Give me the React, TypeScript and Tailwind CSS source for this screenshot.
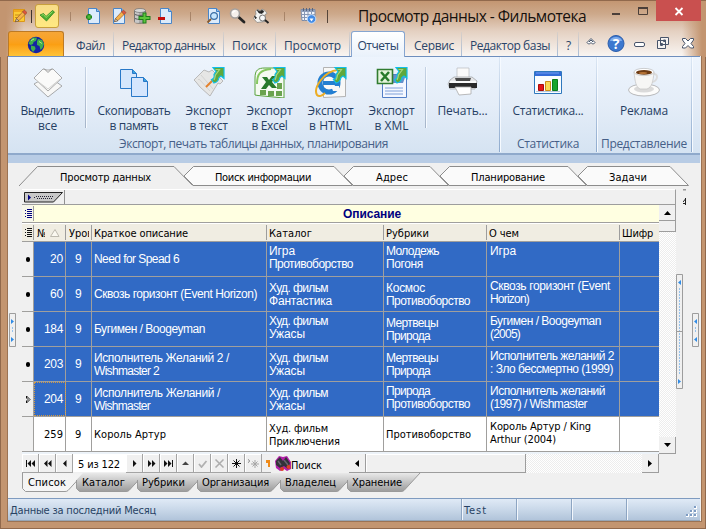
import { useLayoutEffect, useRef, useState } from "react";
import type { ReactNode } from "react";

const segoe = "font-['Open_Sans','Noto_Sans',sans-serif]";
const tahoma = "font-['DejaVu_Sans_Condensed','DejaVu_Sans',sans-serif] [font-stretch:condensed] text-[11px] leading-[13px]";
const msSans = "font-['Liberation_Sans',Arial,sans-serif] text-[12px] leading-[13px]";

/* Text run tracked so that it fills exactly w pixels. */
function T({ w, className = "", children }: { w: number; className?: string; children: string }) {
  const ref = useRef<HTMLSpanElement>(null);
  const [ls, setLs] = useState(0);
  useLayoutEffect(() => {
    if (ref.current) setLs((w - ref.current.getBoundingClientRect().width) / children.length);
  }, [w, children]);
  return (
    <span ref={ref} className={`inline-block shrink-0 whitespace-pre ${className}`} style={{ letterSpacing: `${ls}px` }}>
      {children}
    </span>
  );
}

function Svg({ w, h, className = "", children }: { w: number; h: number; className?: string; children: ReactNode }) {
  return (
    <svg width={w} height={h} viewBox={`0 0 ${w} ${h}`} className={`block shrink-0 ${className}`} fill="none">
      {children}
    </svg>
  );
}

const Page = () => (
  <>
    <path d="M2.500.5h8l3 3v12h-11z" fill="#dcebfb" stroke="#4a86c8" />
    <path d="M10.500.5v3h3" fill="#8fbdf0" stroke="#3f7fc4" />
  </>
);

const Pencil = () => (
  <g>
    <path d="M4.500 10.500 11 3.500l2.500 2.500-6.500 6.500-3.500 1.200z" fill="#f6b24a" stroke="#a5632a" strokeWidth=".8" />
    <path d="m10.500 4 1.800-2 2.800 2.600-1.900 2z" fill="#e0553a" stroke="#8a4a3a" strokeWidth=".6" />
    <path d="m3.500 13.700 1-3 2.400 2z" fill="#f5dcc0" stroke="#333" strokeWidth=".5" />
  </g>
);

function TitleBar() {
  return (
    <div className="flex h-[31px] items-start">
      <div className="flex h-[31px] w-[358px] items-start pt-[8px]">
        <Svg w={14} h={16} className="ml-[13px]">
          <path d="M.5 1.500h11v12H.5z" fill="#fccb35" stroke="#dc9817" />
          <path d="M1 2h10v2H1z" fill="#f0a81e" />
          <path d="M2 7h6M2 9.500h4" stroke="#c98a18" />
          <g transform="translate(-1 0)"><Pencil /></g>
        </Svg>
        <div className="ml-[4px] mt-[2px] h-[13px] w-px bg-[#3d342e]" />
        <div className="-mt-[4px] ml-[3px] flex h-[24px] w-[24px] items-center justify-center rounded-[3px] border border-[#c9a03c] bg-linear-to-b from-[#f8dc88] to-[#ffe981]">
          <Svg w={16} h={14}>
            <path d="m1 6 3.500-1.500 2.500 3L13.500 1.500 15.500 3 7.500 12z" fill="#4fae32" stroke="#2c8420" strokeWidth=".8" />
            <path d="m2.500 6.300 2-.8L7 8.500l6.500-5.800" stroke="#92dc62" />
          </Svg>
        </div>
        <div className="ml-[11px] mt-[4px] h-[9px] w-px bg-[#a88468]" />
        <Svg w={16} h={16} className="ml-[15px]">
          <Page />
          <path d="M0 9h6M3 6v6" stroke="#157a15" strokeWidth="3" />
          <path d="M.7 9h4.600M3 6.700v4.600" stroke="#62c840" strokeWidth="1.200" />
        </Svg>
        <Svg w={17} h={16} className="ml-[9px]">
          <Page />
          <Pencil />
        </Svg>
        <Svg w={17} h={16} className="ml-[6px]">
          <path d="M.5 2.500v11c0 1.300 2 1.800 5.500 1.800s5.500-.5 5.500-1.800v-11" fill="#a9a9a9" stroke="#6a6a6a" strokeWidth=".8" />
          <path d="M2 4v11M4 4v11" stroke="#e8e8e8" />
          <ellipse cx="6" cy="2.500" rx="5.500" ry="2" fill="#d8d8d8" stroke="#707070" strokeWidth=".7" />
          <path d="M1 6.500c3 1.300 7 1.300 10 0M1 10.500c3 1.300 7 1.300 10 0" stroke="#5c5c5c" />
          <path d="M4.500 10h12M10.500 4.500v11" stroke="#1f7d1c" strokeWidth="4" />
          <path d="M5.500 10h10M10.500 5.500v9" stroke="#5cc63c" strokeWidth="2" />
        </Svg>
        <Svg w={16} h={16} className="ml-[7px]">
          <Page />
          <path d="M0 10.500h7" stroke="#c40d0d" strokeWidth="3" />
        </Svg>
        <div className="ml-[16px] mt-[4px] h-[9px] w-px bg-[#a88468]" />
        <Svg w={15} h={16} className="ml-[15px]">
          <Page />
          <path d="m5 11-3.500 3.500" stroke="#8a5a2c" strokeWidth="2" />
          <circle cx="8" cy="8" r="3.400" fill="#c6e6ff" stroke="#3c6ea4" strokeWidth="1.200" />
        </Svg>
        <Svg w={17} h={16} className="ml-[8px]">
          <path d="m9.500 9 5.500 5" stroke="#242424" strokeWidth="2.800" strokeLinecap="round" />
          <circle cx="6" cy="5.500" r="4.500" fill="#f5f0ec" stroke="#a4a09e" strokeWidth="1.600" />
          <path d="M3.500 5a3 3 0 0 1 3-2" stroke="#fff" strokeWidth="1.500" />
        </Svg>
        <Svg w={18} h={16} className="ml-[7px]">
          <path d="M2.500 3 5 1l2 2.200L9 1l3 1.500 2 3-2 1v7l-8 1-3.500-4L3 6z" fill="#f4f4f2" stroke="#8d8a86" strokeWidth=".8" />
          <path d="M4 2 7 3.500 9 2l2 1.500-2 2-3-.5zM1.500 8l2 1.500-1 1.500z" fill="#252525" stroke="#252525" strokeWidth=".6" />
          <circle cx="9.500" cy="10" r="3" fill="#f8f8f8" stroke="#777" />
          <path d="m12 12 3.500 3" stroke="#222" strokeWidth="2" />
        </Svg>
        <div className="ml-[13px] mt-[4px] h-[9px] w-px bg-[#a88468]" />
        <Svg w={17} h={16} className="ml-[15px]">
          <path d="M1 1.500h14v11H2z" fill="#f1f4fa" stroke="#7e8ca6" />
          <path d="M1 2h14v2H1z" fill="#8f9fbc" />
          <path d="M1 6.500h14M1 9.500h12M4.500 4v9M8 4v9M11.500 4v9" stroke="#8797b4" />
          <path d="M3.500 0v3M6.500 0v3M9.500 0v3M12.500 0v3" stroke="#59657c" />
          <circle cx="11.500" cy="11" r="4.300" fill="#438be5" stroke="#dcecff" strokeWidth=".8" />
          <path d="M9.500 10.500h4l-2 3z" fill="#fff" />
        </Svg>
        <div className="ml-[10px] mt-[2px] h-[13px] w-px bg-[#55453a]" />
      </div>
      <T w={228} className={`${segoe} mt-[5px] text-[15.500px] leading-[22px] text-[#17110d]`}>
        Просмотр данных - Фильмотека
      </T>
      <Svg w={70} h={22} className="ml-auto mr-0">
        <path d="M25 0h45v21H25z" fill="#c9504f" />
        <path d="m44.500 8 7 7m0-7-7 7" stroke="#fff" strokeWidth="1.800" />
      </Svg>
      <div className="w-[5px]" />
    </div>
  );
}

function WindowGlyphs() {
  return (
    <Svg w={42} h={14} className="absolute left-[610px] top-[5px]">
      <path d="M2 9h8" stroke="#4b3f39" strokeWidth="2" />
      <path d="M28.500 3v6.500h9V3z" stroke="#4b3f39" />
      <path d="M28 3h10" stroke="#4b3f39" strokeWidth="2" />
    </Svg>
  );
}

type Item = [string, number, number, number, boolean];
/* label, text width, cell width, left padding, separator */
const menu: Item[] = [
  ["Файл", 29, 38, 0, true],
  ["Редактор данных", 93, 110, 8, true],
  ["Поиск", 35, 52, 8, true],
  ["Просмотр", 57, 74, 8, true],
];
const menu2: Item[] = [
  ["Сервис", 40, 57, 9, true],
  ["Редактор базы", 80, 96, 8, true],
  ["?", 6, 21, 8, true],
];

function MenuItems({ items }: { items: Item[] }) {
  return (
    <>
      {items.map(([label, w, cell, pad, sep], i) => (
        <div key={i} className="flex h-[25px] shrink-0 items-center" style={{ width: cell, paddingLeft: pad }}>
          <T w={w} className="mt-[4px]">{label}</T>
          {sep && <div className="ml-auto h-[24px] w-px bg-linear-to-b from-[#d9cfc8] to-[#a9bdd6]" />}
        </div>
      ))}
    </>
  );
}

function MenuRow() {
  return (
    <div className={`flex h-[26px] items-start pl-[8px] text-[12px] leading-[16px] text-[#2a4468] ${segoe}`}>
      <div className="flex h-[26px] w-[56px] items-center justify-center rounded-t-[3px] border border-b-0 border-[#bd7a24] bg-linear-to-b from-[#f5a637] via-[#fb9f13] to-[#ffc63a]">
        <Svg w={18} h={18}>
          <circle cx="9" cy="9" r="8.200" fill="#1521a4" />
          <path d="M3 4.500 6 1.600l4 .2-1 3L6.500 6 6 8 3.500 9 1.500 7.500zM4 9.500l4 1 .5 2.500L6 16l-2-3zM11 3l4 1 2 4-1.500 4-2 2-1-4-2.500-1V5.500z" fill="#3fae4d" />
          <path d="M4 4.500 7 3M12 5.500l3 2" stroke="#b2e879" />
        </Svg>
      </div>
      <div className="w-[12px]" />
      <MenuItems items={menu} />
      <div className="relative ml-[1px] flex h-[26px] w-[54px] items-center justify-center rounded-t-[3px] border border-b-0 border-[#86a5d0] bg-linear-to-b from-white to-[#e9f1fb]">
        <T w={41} className="mt-[2px]">Отчеты</T>
      </div>
      <MenuItems items={menu2} />
      <Svg w={112} h={20} className="ml-[6px] mt-[3px]">
        <path d="m2 8.500 4-4 4 4-1.500 1.500h-1L6 8.500 4.500 10h-1z" fill="#fff" stroke="#47556a" />
        <path d="m4 8 2-2 2 2" stroke="#47556a" />
        <circle cx="31" cy="9.500" r="8" fill="#3c78cf" stroke="#2b5dab" />
        <path d="M25 7a6 4 0 0 1 12 0" fill="#7facec" />
        <text x="31" y="14.500" textAnchor="middle" fill="#fff" fontFamily="Open Sans" fontSize="14" fontWeight="700">?</text>
        <rect x="49.500" y="8.500" width="10" height="4" rx="1.500" fill="#fff" stroke="#48546a" />
        <path d="M75.500 3.500h8v7h-8zM72.500 6.500h8v8h-8z" fill="#f5f2f0" stroke="#48546a" />
        <path d="M75.500 9.500h2v2h-2zM78.500 6h2v1.500h-2z" stroke="#48546a" />
        <path d="m97.500 4.500h3l2.500 2.500 2.500-2.500h3v1.500L106 9.500l2.500 3v1.500h-3L103 11.500 100.500 14h-3v-1.500l2.500-3-2.500-3.500z" fill="#fff" stroke="#48546a" />
      </Svg>
    </div>
  );
}

const ExportArrow = () => (
  <g>
    <path d="M20 1.500H31v11l-3-2.500-2 1.500c-.5 3-2 5-5 5.500l-2.500-3.500c2.500-.5 3-2.500 2.500-5l2-3z" fill="#5fa83c" stroke="#10bfea" strokeWidth="1.200" />
    <path d="M22.500 3.500h4L22.500 9c-.3 2-.5 3-1.500 5" stroke="#a5d67c" strokeWidth="1.200" />
  </g>
);

const ribbonIcons: Record<string, ReactNode> = {
  select: (
    <>
      <path d="m2 18 14-8 14 10-14 11z" fill="#f7f7f6" stroke="#a6a8aa" />
      <path d="m2 12 9-9 4 1h2l4-1 9 9-14 13z" fill="#fafaf9" stroke="#aaa" />
      <path d="m12 2.500 4 4 4-4" stroke="#999" />
      <path d="m4 14 12 9 12-10" stroke="#d2d2d0" />
    </>
  ),
  copy: (
    <>
      <path d="M2.500 3.500h12l4 4v15h-16z" fill="#d4e6fc" stroke="#2878c8" />
      <path d="M14.500 3.500v4h4" fill="#3ba2de" stroke="#2878c8" />
      <path d="M13.500 11.500h12l4 4v15h-16z" fill="#d5e6fd" stroke="#2878c8" />
      <path d="M25.500 11.500v4h4" fill="#3ba2de" stroke="#2878c8" />
    </>
  ),
  text: (
    <>
      <path d="m1 14 10-10 5 2 3-2 11 11-3 3-2-1-8 13-10-9-4-5z" fill="#e6e6e5" stroke="#b9b9b9" />
      <path d="m5 14 1-1 11 12M8 9l12 14" stroke="#d3d3d2" />
      <path d="m13 21 8-8" stroke="#e5812a" strokeWidth="2" />
      <ExportArrow />
    </>
  ),
  excel: (
    <>
      <path d="M1 29V12C1 4 4 2 11 2h19v30L4 29.500z" fill="#f5faf2" stroke="#59a23e" />
      <path d="M3 18C3 8 6 4 17 3" stroke="#85c75f" strokeWidth="2" />
      <path d="m8 11 5 0 2 3 3-4h5l-5 6 5 6h-5l-3-3-3 4H7l5-7z" fill="#277a2b" />
      <path d="M6 24h6v5H6zM14 25h6v5h-6zM22 25h6v5h-6zM23 17h5v6h-5z" fill="#6aa34f" />
      <ExportArrow />
    </>
  ),
  html: (
    <>
      <path d="M8.500 1.500h22v29l-22 1z" fill="#f8f8f7" stroke="#b3b3b3" />
      <circle cx="14" cy="17" r="9" stroke="#237fd1" strokeWidth="5" />
      <path d="M8 17h14" stroke="#237fd1" strokeWidth="4" />
      <path d="M16 20h8v5h-6z" fill="#f8f8f7" />
      <path d="M23 4C9 5-2 22 2 29c2 2 5 1 8-2" stroke="#ecad25" strokeWidth="2" />
      <ExportArrow />
    </>
  ),
  xml: (
    <>
      <path d="M6.500 8.500h24v23h-24z" fill="#f4f7ff" stroke="#537fc7" />
      <path d="M9 22h18M9 25h18M9 28h18" stroke="#7ea0d8" />
      <path d="M16 17h11l3-8H16z" fill="#6690cc" />
      <path d="M1.500 3.500h15v14h-15z" fill="#e4f4dc" stroke="#317c30" strokeWidth="1.600" />
      <path d="m5 6 8 9m0-9-8 9" stroke="#277a2b" strokeWidth="2.500" />
      <ExportArrow />
    </>
  ),
  print: (
    <>
      <path d="M10 2h12v12H10z" fill="#fafafa" stroke="#b7babd" strokeWidth=".7" />
      <path d="m3 14 4-3h18l5 4-2 8H3L1 18z" fill="#e5e6e8" stroke="#9b9da0" strokeWidth=".7" />
      <path d="m8 12 1 3h14l1-3z" fill="#4b4b4b" />
      <path d="M2 17h28v5H2z" fill="#292929" />
      <path d="M3 16h26" stroke="#fff" strokeWidth="1.500" />
      <path d="M8 21h16v7l-12 1z" fill="#fff" stroke="#aaa" strokeWidth=".8" />
    </>
  ),
  stats: (
    <>
      <path d="M2.500 5.500h27v22h-27z" fill="#fafdff" stroke="#2f78bd" />
      <path d="M3 6h26v4H3z" fill="#346bd8" />
      <path d="M4 7h23" stroke="#709ff0" />
      <path d="M6.500 18.500h5v6h-5z" fill="#e31717" stroke="#a90b0b" />
      <path d="M13.500 15.500h5v9h-5z" fill="#f9dc55" stroke="#cf8d15" />
      <path d="M20.500 13.500h5v11h-5z" fill="#16a52c" stroke="#0b7a1b" />
      <path d="M4 25.500h24" stroke="#b8c8dc" />
    </>
  ),
  coffee: (
    <>
      <ellipse cx="16" cy="24" rx="15.500" ry="6" fill="#fcfcfb" stroke="#b8b9bb" />
      <ellipse cx="16" cy="23" rx="10" ry="3.500" fill="#dadada" />
      <path d="M25 8c6-1 5 7-1 8" stroke="#dcdcdc" strokeWidth="2" />
      <path d="M6 6c1 10 2 15 6 17h7c5-2 6-7 7-17z" fill="#f6f6f5" stroke="#c2c2c2" strokeWidth=".7" />
      <ellipse cx="16" cy="6" rx="10" ry="3.600" fill="#fff" stroke="#bbb" strokeWidth=".7" />
      <ellipse cx="16" cy="6.400" rx="8" ry="2.400" fill="#6d3b13" />
      <ellipse cx="15" cy="7" rx="4" ry="1" fill="#b67335" />
    </>
  ),
};

type Btn = { icon: string; cell: string; a: [string, number]; b?: [string, number] };
const Button = ({ icon, cell, a, b }: Btn) => (
  <div className={`flex shrink-0 flex-col items-center pt-[9px] ${cell}`}>
    <Svg w={32} h={32}>{ribbonIcons[icon]}</Svg>
    <T w={a[1]} className="mt-[5px]">{a[0]}</T>
    {b && <T w={b[1]}>{b[0]}</T>}
  </div>
);

const GroupLine = () => <div className="h-[95px] w-px shrink-0 bg-linear-to-b from-[#dce7f4] to-[#8fabce] shadow-[1px_0_0_#f6faff]" />;
const Divider = () => <div className="mt-[10px] h-[61px] w-px shrink-0 bg-linear-to-b from-[#c4d2e4] to-[#a6b5c9] shadow-[1px_0_0_#f6faff]" />;

function Ribbon() {
  return (
    <div className={`-mt-px flex h-[99px] w-full border-b-2 border-t border-b-[#8fa9cb] border-t-[#6e8ebd] bg-linear-to-b from-[#edf4fd] via-[#e4edf8] to-[#d5e3f2] text-[12px] leading-[15px] text-[#263e63] ${segoe}`}>
      <div className="flex w-[491px] flex-col items-start">
        <div className="flex h-[79px]">
          <Button icon="select" cell="w-[79px]" a={["Выделить", 54]} b={["все", 19]} />
          <div className="-ml-[2px]"><Divider /></div>
          <Button icon="copy" cell="w-[96px]" a={["Скопировать", 73]} b={["в память", 49]} />
          <div className="-ml-[2px]" />
          <Button icon="text" cell="w-[57px]" a={["Экспорт", 46]} b={["в текст", 38]} />
          <div className="ml-[4px]" />
          <Button icon="excel" cell="w-[57px]" a={["Экспорт", 46]} b={["в Excel", 36]} />
          <div className="ml-[4px]" />
          <Button icon="html" cell="w-[57px]" a={["Экспорт", 46]} b={["в HTML", 43]} />
          <div className="ml-[4px]" />
          <Button icon="xml" cell="w-[57px]" a={["Экспорт", 46]} b={["в XML", 34]} />
          <div className="ml-[5px]"><Divider /></div>
          <Button icon="print" cell="w-[73px]" a={["Печать...", 50]} />
        </div>
        <T w={269} className="ml-[111px] text-[#465f88]">Экспорт, печать таблицы данных, планирования</T>
      </div>
      <GroupLine />
      <div className="flex w-[96px] flex-col items-center">
        <div className="h-[79px]"><Button icon="stats" cell="w-[96px]" a={["Статистика...", 71]} /></div>
        <T w={62} className="text-[#465f88]">Статистика</T>
      </div>
      <GroupLine />
      <div className="flex w-[94px] flex-col items-center">
        <div className="h-[79px]"><Button icon="coffee" cell="w-[94px]" a={["Реклама", 48]} /></div>
        <T w={86} className="text-[#465f88]">Представление</T>
      </div>
      <GroupLine />
    </div>
  );
}

/* label, text width, text offset, cell width */
const viewTabs: [string, number, number, number][] = [
  ["Просмотр данных", 91, 41, 165],
  ["Поиск информации", 96, 31, 160],
  ["Адрес", 32, 32, 96],
  ["Планирование", 74, 31, 138],
  ["Задачи", 38, 31, 102],
];

function ViewTabs() {
  return (
    <div className={`flex h-[23px] pl-[11px] pt-[3px] ${tahoma}`}>
      {viewTabs.map(([label, w, off, cell], i) => {
        const top = cell - 10;
        const outline = i
          ? `M0 10 L9.500.5 H${top} L${top + 18.5} 19.500 H9`
          : `M0 20 L18.500.5 H${top} L${top + 18.5} 19.500`;
        return (
          <div key={label} className="relative h-[20px] shrink-0" style={{ width: cell, paddingLeft: off }}>
            <Svg w={cell + 12} h={20} className="absolute left-0 top-0">
              <path d={outline} fill={i ? "#fafafa" : "#f0f0f0"} stroke="#8c8c8c" />
              {i > 0 && <path d="m0 10 9.500 9.500" stroke="#8c8c8c" />}
            </Svg>
            <T w={w} className="relative mt-[5px] text-black">{label}</T>
          </div>
        );
      })}
    </div>
  );
}

type Line = [string, number];
type Cell = { pad: string; lines: Line[] };
const one = (t: string, w: number): Cell => ({ pad: "pt-[11px]", lines: [[t, w]] });
const hi = (...lines: Line[]): Cell => ({ pad: "pt-[3px]", lines });
const lo = (...lines: Line[]): Cell => ({ pad: "pt-[5px]", lines });

const film: Line = ["Худ. фильм", 59];
const horror: Line = ["Ужасы", 36];
const nature: Line = ["Природа", 44];
const dead: Line = ["Мертвецы", 52];
const versus: Line = ["Противоборство", 84];

const rows: [string, number, Cell, Cell, Cell, Cell][] = [
  ["20", 13, one("Need for Spead 6", 85), hi(["Игра", 26], versus), hi(["Молодежь", 53], ["Погоня", 37]), hi(["Игра", 26])],
  ["60", 13, one("Сквозь горизонт (Event Horizon)", 163), lo(film, ["Фантастика", 63]), lo(["Космос", 39], versus), hi(["Сквозь горизонт (Event", 120], ["Horizon)", 39])],
  ["184", 19, one("Бугимен / Boogeyman", 111), hi(film, horror), lo(dead, nature), hi(["Бугимен / Boogeyman", 111], ["(2005)", 30])],
  ["203", 19, lo(["Исполнитель Желаний 2 /", 135], ["Wishmaster 2", 65]), lo(film, horror), lo(dead, nature), hi(["Исполнитель желаний 2", 124], [": Зло бессмертно (1999)", 123])],
  ["204", 19, lo(["Исполнитель Желаний /", 126], ["Wishmaster", 56]), lo(film, horror), hi(nature, versus), hi(["Исполнитель желаний", 115], ["(1997) / Wishmaster", 97])],
  ["259", 19, one("Король Артур", 72), lo(["Худ. фильм", 59], ["Приключения", 71]), one("Противоборство", 85), hi(["Король Артур / King", 101], ["Arthur (2004)", 66])],
];

const cellWidths = ["w-[175px] pl-[2px]", "w-[117px] pl-[2px]", "w-[103px] pl-[2px]", "w-[133px] pl-[3px]"];

function DataCell({ cell, width }: { cell: Cell; width: string }) {
  return (
    <div className={`flex h-full shrink-0 flex-col items-start border-r border-[#a09f9d] ${width} ${cell.pad}`}>
      {cell.lines.map(([t, w], i) => <T key={i} w={w}>{t}</T>)}
    </div>
  );
}

const ListGlyph = ({ color }: { color: string }) => (
  <Svg w={7} h={10} className="ml-[3px]">
    <path d="M0 1.500h1M0 4.500h1M0 7.500h1M2 .5h5M2 2.500h5M2 4.500h5M2 6.500h5M2 8.500h5" stroke={color} />
  </Svg>
);

function Grid() {
  return (
    <div className={`w-[637px] shrink-0 text-black ${tahoma}`}>
      <div className="flex h-[16px] items-center border-b border-t border-b-[#9d9d9d] border-t-white bg-[#f0f0f0]">
        <Svg w={40} h={11} className="ml-[2px]">
          <path d="M.5.500h38l-9 9.500H.5z" fill="#c8c8c8" stroke="#222" />
          <path d="M4 2.500v6l3-3z" fill="#00007f" />
          <path d="M10 5.500h1M12 4.500h17M13 6.500h16" stroke="#223" strokeDasharray="1 1" />
        </Svg>
        <div className="h-[14px] w-px bg-[#909090]" />
      </div>
      <div className="flex h-[17px] items-center bg-[#ffffe1]">
        <div className="flex h-[17px] w-[11px] items-center bg-[#f6f6ea]"><ListGlyph color="#00007f" /></div>
        <div className="h-[15px] w-px bg-[#9d9d9d]" />
        <T w={58} className="ml-[309px] mt-[2px] font-['Liberation_Sans',Arial,sans-serif] text-[12px] font-bold text-[#00007f]">Описание</T>
      </div>
      <div className="h-px bg-[#a09f9d]" />
      <div className="flex h-[18px] items-center border-t border-white bg-[#f0ede2]">
        <div className="flex w-[11px]"><ListGlyph color="#111" /></div>
        <div className="flex h-[15px] w-[32px] items-center overflow-hidden border-l border-[#9d9d9d] pl-[3px]">
          <span className="mt-px w-[8px] overflow-hidden">№</span>
          <Svg w={10} h={8} className="ml-[5px]"><path d="M.5 7.500 5 .5l4 7z" fill="#faf8f0" stroke="#bcb9ae" /></Svg>
        </div>
        <div className="h-[15px] w-[26px] overflow-hidden border-l border-[#9d9d9d] pl-[3px] pt-[2px]"><span className="block w-[20px] overflow-hidden whitespace-nowrap">Уровень</span></div>
        <div className="h-[15px] w-[175px] border-l border-[#9d9d9d] pl-[2px] pt-[2px]"><T w={94}>Краткое описание</T></div>
        <div className="h-[15px] w-[117px] border-l border-[#9d9d9d] pl-[2px] pt-[2px]"><T w={43}>Каталог</T></div>
        <div className="h-[15px] w-[103px] border-l border-[#9d9d9d] pl-[2px] pt-[2px]"><T w={43}>Рубрики</T></div>
        <div className="h-[15px] w-[133px] border-l border-[#9d9d9d] pl-[2px] pt-[2px]"><T w={30}>О чем</T></div>
        <div className="h-[15px] w-[40px] border-l border-[#9d9d9d] pl-[2px] pt-[2px]"><T w={31}>Шифр</T></div>
      </div>
      <div className="h-px bg-[#a09f9d]" />
      {rows.map(([id, w, ...cells], r) => (
        <div key={id} className={`flex h-[35px] border-b border-[#a09f9d] ${r < 5 ? `bg-[#316ac5] text-white ${msSans}` : "bg-white"}`}>
          <div className="flex h-[34px] w-[11px] shrink-0 items-center justify-center bg-[#f0f0f0]">
            {r < 4 && <div className="mt-[1px] h-[5px] w-[4px] rounded-full bg-black" />}
            {r === 4 && (
              <Svg w={6} h={9}><path d="M1.500 1v2l1.500 1.500L1.500 6v2L5 4.500z" fill="#fff" stroke="#111" /></Svg>
            )}
          </div>
          <div className="h-full w-px shrink-0 bg-[#a09f9d]" />
          <div className={`flex h-full w-[32px] shrink-0 justify-end border-r border-[#a09f9d] pr-[2px] pt-[11px] ${r === 4 ? "outline outline-dotted -outline-offset-1 outline-[#d59a3f]" : ""}`}><T w={w}>{id}</T></div>
          <div className="h-full w-[26px] shrink-0 border-r border-[#a09f9d] pl-[9px] pt-[11px]">9</div>
          {cells.map((c, i) => <DataCell key={i} cell={c} width={cellWidths[i]} />)}
        </div>
      ))}
      <div className="h-[2px] bg-[#edf3f9]" />
    </div>
  );
}

const checker = "bg-[conic-gradient(#fff_25%,#ededed_0_50%,#fff_0_75%,#ededed_0)] bg-[length:2px_2px]";

function VScroll() {
  return (
    <div className="flex w-[17px] shrink-0 flex-col">
      <div className="h-[16px] shrink-0 border-b border-r border-t border-[#9d9d9d] border-t-white bg-[#f0f0f0]" />
      <div className="flex h-[16px] shrink-0 items-center justify-center border-b border-r border-[#9d9d9d] bg-[#f0f0f0]">
        <Svg w={7} h={4}><path d="M0 4h7L3.500 0z" fill="#000" /></Svg>
      </div>
      <div className="h-[11px] shrink-0 border-b border-r border-[#9d9d9d] bg-[#f0f0f0]" />
      <div className={`flex-1 ${checker}`} />
      <div className="flex h-[17px] shrink-0 items-center justify-center border-b border-r border-[#9d9d9d] bg-[#f0f0f0]">
        <Svg w={7} h={4}><path d="M0 0h7L3.500 4z" fill="#000" /></Svg>
      </div>
    </div>
  );
}

const navGlyphs: [string, ReactNode][] = [
  ["w-[17px]", <path key="a" d="M1 1h1v7H1zM6 1v7L2.500 4.500zM10 1v7L6.500 4.500z" fill="#111" />],
  ["w-[17px]", <path key="b" d="M5.500 1v7L2 4.500zM9.500 1v7L6 4.500z" fill="#111" />],
  ["w-[17px]", <path key="c" d="M7.500 1v7L4 4.500z" fill="#111" />],
];
const navGlyphs2: [string, ReactNode][] = [
  ["w-[17px]", <path key="d" d="M4 1v7l3.500-3.500z" fill="#111" />],
  ["w-[17px]", <path key="e" d="M2 1v7l3.500-3.500zM6 1v7l3.500-3.500z" fill="#111" />],
  ["w-[17px]", <path key="f" d="M1 1v7l3.500-3.500zM5 1v7l3.500-3.500zM9 1h1v7H9z" fill="#111" />],
  ["w-[17px]", <path key="g" d="M2 6h7L5.500 2.500z" fill="#444" />],
  ["w-[17px]", <path key="h" d="m2 5 2.500 3L9.500 2" stroke="#b0b0b0" strokeWidth="1.800" />],
  ["w-[17px]", <path key="i" d="m1.500.5 8 8m0-8-8 8" stroke="#adadad" strokeWidth="1.500" />],
  ["w-[17px]", <path key="j" d="M5.500 0v9M1 4.500h9M2.500 1.500l6 6m0-6-6 6" stroke="#111" />],
  ["w-[17px]", <path key="k" d="M0 0v4l2-2zM7 1v8M3 5h8M4.500 2.500l5 5m0-5-5 5" stroke="#a5a5a5" />],
];
const NavButtons = ({ items }: { items: [string, ReactNode][] }) => (
  <>
    {items.map(([w, g], i) => (
      <div key={i} className={`flex h-[19px] shrink-0 items-center justify-center border-b border-r border-[#a4a4a4] bg-[#f0f0f0] shadow-[inset_1px_1px_0_#fff] ${w}`}>
        <Svg w={11} h={9}>{g}</Svg>
      </div>
    ))}
  </>
);

function NavBar() {
  return (
    <div className={`flex h-[19px] w-[637px] text-black ${tahoma}`}>
      <NavButtons items={navGlyphs} />
      <div className="flex h-[18px] w-[53px] shrink-0 items-center bg-white pl-[5px] pt-[2px]"><T w={42}>5 из 122</T></div>
      <div className="flex w-[145px] shrink-0">
        <NavButtons items={navGlyphs2} />
        <div className="flex h-[19px] w-[9px] items-center justify-end border-b border-[#a4a4a4]">
          <Svg w={5} h={9}><path d="M0 1h4v7H2V4H0z" fill="#ef8a19" /></Svg>
        </div>
      </div>
      <div className="flex h-[19px] w-[78px] shrink-0 items-center bg-[#f0f0f0]">
        <Svg w={18} h={18} className="ml-[3px]">
          <path d="M1 6 5 1l4 1 4-1 4 6v7l-4 2-3-2-4 2-4-3z" fill="#b321ab" />
          <path d="m2 6 4-4 3 4 3-4 4 6-2 6-4-3-4 2-4-3z" fill="#333238" />
          <path d="m4 6 3 4M10 5l4 5" stroke="#68656f" strokeWidth="1.500" />
          <circle cx="8" cy="14" r="2" fill="#dc3e24" /><circle cx="14.500" cy="12" r="2" fill="#dc3e24" />
        </Svg>
        <T w={31} className="-ml-px mt-[3px]">Поиск</T>
      </div>
      <div className="flex h-[19px] w-[17px] shrink-0 items-center justify-center border-b border-r border-[#9d9d9d] bg-[#f0f0f0]">
        <Svg w={4} h={7}><path d="M4 0v7L0 3.500z" fill="#000" /></Svg>
      </div>
      <div className="h-[19px] w-[160px] shrink-0 border-b border-r border-[#9d9d9d] bg-[#f0f0f0] shadow-[inset_1px_1px_0_#fff]" />
      <div className={`h-[19px] flex-1 ${checker}`} />
      <div className="flex h-[19px] w-[17px] shrink-0 items-center justify-center border-b border-r border-[#9d9d9d] bg-[#f0f0f0]">
        <Svg w={4} h={7}><path d="M0 0v7l4-3.500z" fill="#000" /></Svg>
      </div>
    </div>
  );
}

/* label, text width, text offset, cell width */
const sheets: [string, number, number, number][] = [
  ["Список", 38, 6, 54],
  ["Каталог", 43, 6, 61],
  ["Рубрики", 43, 5, 60],
  ["Организация", 67, 5, 83],
  ["Владелец", 51, 5, 67],
  ["Хранение", 50, 5, 67],
];

function SheetTabs() {
  return (
    <div className={`flex h-[26px] text-black ${tahoma}`}>
      {sheets.map(([label, w, off, cell], i) => {
        const foot = i === 5 ? 57 : cell - 8;
        return (
          <div key={label} className="relative h-[19px] shrink-0" style={{ width: cell, paddingLeft: off }}>
            <Svg w={cell + 12} h={19} className="absolute left-0 top-0">
              <defs>
                <linearGradient id={`sheet${i}`} x1="0" y1="0" x2="0" y2="1">
                  <stop offset="0" stopColor={i ? "#e9e9e9" : "#f2f2f2"} />
                  <stop offset="1" stopColor={i ? "#9b9b9b" : "#f6f6f6"} />
                </linearGradient>
              </defs>
              <path d={`M.5 ${i ? 7 : 0}V15.500L3.500 18.500H${foot - 3}Q${foot - 1} 18.500 ${foot} 17.500L${foot + 16} 0H${i ? 7 : 0}z`} fill={`url(#sheet${i})`} />
              <path d={`M.5 ${i ? 7 : 0}V15.500L3.500 18.500H${foot - 3}Q${foot - 1} 18.500 ${foot} 17.500L${foot + 16} 0`} stroke="#9a9a9a" />
            </Svg>
            <T w={w} className="relative mt-[3px]">{label}</T>
          </div>
        );
      })}
    </div>
  );
}

function Splitter({ h, left, right }: { h: number; left: boolean; right: boolean }) {
  return (
    <Svg w={7} h={h}>
      <path d={`M.5.5h6v${h - 1}h-6z`} fill="#f0f0f0" stroke="#9d9d9d" />
      <path d={left ? "M5 6v5L2 8.500z" : "M2 6v5l3-2.500z"} fill="#2f8be6" />
      <path d={left && !right ? `M5 ${h - 10}v5l-3-2.500z` : `M2 ${h - 10}v5l3-2.500z`} fill="#2f8be6" />
      <path d={`M3.500 14.500V${h - 14}`} stroke="#3b94e8" strokeDasharray="1 2" />
      {right && <path d="M0 57.500h7" stroke="#9d9d9d" />}
    </Svg>
  );
}

function StatusBar() {
  const sep = <div className="h-[21px] w-px bg-[#8da5c2] shadow-[1px_0_0_#f3f7fc]" />;
  return (
    <div className={`flex h-[24px] items-center border-b border-t border-b-[#96a5b5] border-t-[#7f9bc0] bg-linear-to-b from-[#e0eaf6] via-[#c9d8e9] to-[#b1c4da] text-[#274263] ${tahoma}`}>
      <T w={146} className="ml-[2px] mt-px">Данные за последний Месяц</T>
      <div className="w-[305px]" />{sep}
      <T w={23} className="ml-[2px] mt-px">Test</T>
      <div className="w-[29px]" />{sep}
      <div className="w-[54px]" />{sep}
      <div className="w-[54px]" />{sep}
      <Svg w={12} h={12} className="ml-auto mr-[2px] mt-[4px]">
        <path d="M8 0h3v3H8zM4 4h3v3H4zM8 4h3v3H8zM0 8h3v3H0zM4 8h3v3H4zM8 8h3v3H8z" fill="#fff" />
        <path d="M8 0h2v2H8zM4 4h2v2H4zM8 4h2v2H8zM0 8h2v2H0zM4 8h2v2H4zM8 8h2v2H8z" fill="#7d9bc2" />
      </Svg>
    </div>
  );
}

export default function App() {
  return (
    <div className="relative h-[529px] w-[706px] overflow-hidden bg-[#c39570] shadow-[inset_0_0_0_1px_#91694c]">
      <div className="h-[57px] bg-[linear-gradient(to_right,#c39570_6px,transparent_24px,transparent_682px,#c39570_702px),linear-gradient(to_bottom,#c39570_0px,#cda98b_14px,#e4d0c1_31px,#f9f5f2_56px)] shadow-[inset_0_1px_0_#91694c]">
        <TitleBar />
        <MenuRow />
      </div>
      <WindowGlyphs />
      <div className="-mt-px ml-[7px] flex h-[466px] w-[695px] flex-col border-x border-b border-[#9b7354] bg-[#f0f0f0] pr-px">
        <div className="pt-px">
          <Ribbon />
        </div>
        <div className="h-[8px] shrink-0 bg-[#b8cce5]" />
        <ViewTabs />
        <div className="flex h-[312px] shrink-0">
          <div className="w-[14px] shrink-0 pl-[1px] pt-[127px]"><Splitter h={34} left={false} right={false} /></div>
          <div className="w-[654px] shrink-0">
            <div className="h-[3px]" />
            <div className="flex h-[265px]">
              <Grid />
              <VScroll />
            </div>
            <NavBar />
            <SheetTabs />
          </div>
          <div className="w-[16px] shrink-0 pt-[3px]">
            <Svg w={10} h={20} className="ml-[7px]">
              <path d="M0 .5h3" stroke="#999" strokeWidth="2" />
              <path d="M2.500 9v7M0 14.500h3M2.500 10 0 13" stroke="#222" />
            </Svg>
            <div className="pt-[65px]"><Splitter h={115} left right /></div>
          </div>
          <div className="pt-[127px]"><Splitter h={34} left right={false} /></div>
        </div>
        <StatusBar />
      </div>
    </div>
  );
}
